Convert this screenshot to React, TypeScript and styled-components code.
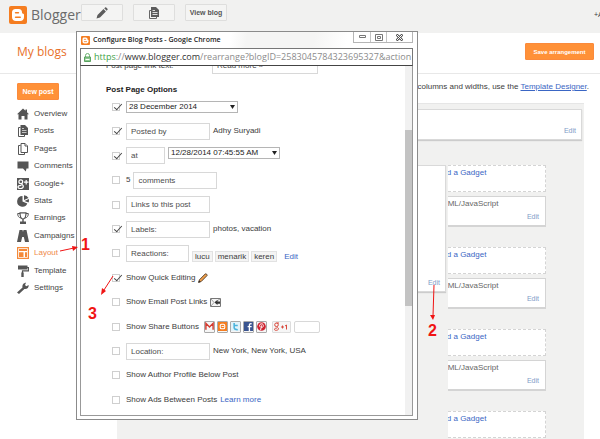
import React from "react";
import styled, { createGlobalStyle } from "styled-components";

const ORANGE = "#f08a4b";
const LINK = "#3a66c4";

const GlobalStyle = createGlobalStyle`
  * { box-sizing: border-box; }
  html, body { margin: 0; height: 100%; overflow: hidden; background: #fff; }
  #root { height: 100%; }
  body, button, input, select {
    font-family: "Liberation Sans", Arial, sans-serif;
    font-size: 8px;
    line-height: 10px;
    color: #3c3c3c;
  }
  a { text-decoration: none; color: ${LINK}; }
  svg { flex: none; }
`;

const Page = styled.div`
  position: relative;
  display: flex;
  flex-direction: column;
  height: 100%;
  overflow: hidden;
`;

const TopBar = styled.header`
  display: flex;
  align-items: flex-start;
  flex: 0 0 33px;
  padding: 4px 0 0 9px;
  background: #f1f1f0;
`;

const Brand = styled.a`
  display: flex;
  align-items: center;
  gap: 4px;
  width: 72px;
  height: 22px;
  font: 14px/22px "Open Sans", sans-serif;
  color: #6b6b6b;
  white-space: nowrap;
`;

const BarButton = styled.button`
  display: flex;
  align-items: center;
  justify-content: center;
  width: 42px;
  height: 17px;
  margin-right: 10px;
  padding: 0;
  border: 1px solid #dededd;
  border-radius: 1px;
  background: #f4f4f3;
  font-size: 7px;
  font-weight: bold;
  color: #555;
  white-space: nowrap;
`;

const Account = styled.span`
  width: 6px;
  margin-left: auto;
  padding-top: 6px;
  overflow: hidden;
  font-size: 7px;
  white-space: nowrap;
`;

const SubHeader = styled.div`
  display: flex;
  align-items: center;
  justify-content: space-between;
  flex: 0 0 41px;
  padding: 0 6px 3px 17px;
  border-bottom: 1px solid #e8e8e8;
`;

const PageTitle = styled.h1`
  margin: 0;
  font: 12px/18px "Open Sans", sans-serif;
  color: #e8702a;
`;

const OrangeButton = styled.button<{ $wide?: boolean }>`
  width: ${(p) => (p.$wide ? 69 : 42)}px;
  height: 17px;
  padding: 0;
  border: 1px solid #fb8a3c;
  border-radius: 1px;
  background: #ff9138;
  font-size: ${(p) => (p.$wide ? 6 : 7)}px;
  font-weight: bold;
  color: #fff;
  white-space: nowrap;
`;

const Body = styled.div`
  display: flex;
  flex: 1;
  min-height: 0;
`;

const Sidebar = styled.aside`
  flex: 0 0 117px;
  padding: 9px 0 0 17px;
`;

const Nav = styled.nav`
  display: grid;
  grid-auto-rows: 1fr;
  height: 192px;
  margin-top: 5px;
`;

const NavLink = styled.a<{ $active?: boolean }>`
  display: flex;
  align-items: center;
  gap: 5px;
  color: ${(p) => (p.$active ? ORANGE : "#444")};
  svg { color: ${(p) => (p.$active ? "#f58a3a" : "#555")}; }
`;

const Main = styled.main`
  display: flex;
  flex-direction: column;
  flex: 1;
  min-width: 0;
  padding: 8px 16px 0 0;
`;

const Hint = styled.p`
  margin: 0 -5px 11px 0;
  text-align: right;
  white-space: nowrap;
  a { text-decoration: underline; }
`;

const Canvas = styled.div`
  flex: 1;
  min-height: 0;
  padding: 5px 2px 0 0;
  border-top: 1px solid #e6e6e6;
  background: #f1f1f0;
`;

const Widget = styled.section<{ $height: number }>`
  display: flex;
  align-items: flex-end;
  justify-content: flex-end;
  height: ${(p) => p.$height}px;
  padding: 0 5px 3px;
  border: 1px solid #d9d9d9;
  box-shadow: 0 1px 1px #ccc;
  background: #fff;
`;

const EditLink = styled.a`
  font-size: 7px;
  line-height: 10px;
  color: #7f9cc8;
`;

const Columns = styled.div`
  display: flex;
  gap: 2px;
  padding: 25px 36px 0 0;
`;

const PostColumn = styled.div`
  flex: 1;
`;

const GadgetColumn = styled.div`
  display: flex;
  flex-direction: column;
  flex: 0 0 98px;
  overflow: hidden;
`;

const AddGadget = styled.a`
  height: 27px;
  margin: 0 0 4px -20px;
  padding: 2px 8px;
  border: 1px dashed #d4d4d4;
  background: #fff;
`;

const Gadget = styled.section`
  display: flex;
  flex-direction: column;
  justify-content: space-between;
  height: 31px;
  margin: 0 0 20px -20px;
  padding: 2px 6px 3px 8px;
  border: 1px solid #d4d4d4;
  border-bottom: 2px solid #d4d4d4;
  background: #fff;
  color: #666;
  ${EditLink} { align-self: flex-end; }
`;

const Popup = styled.section`
  position: absolute;
  top: 31px;
  bottom: 19px;
  left: 76px;
  display: flex;
  flex-direction: column;
  width: 57vw;
  padding: 0 4px 3px 3px;
  border: 1px solid #8b8b8b;
  background: #fff;
`;

const TitleBar = styled.header`
  display: flex;
  align-items: center;
  flex: 0 0 16px;
  gap: 3px;
  padding-left: 1px;
  background: linear-gradient(100deg, #fff 45%, #f5f5f4 50%, #f5f5f4 70%, #fff 80%);
  font-size: 7px;
`;

const WindowTitle = styled.h2`
  margin: 0;
  flex: 1;
  font: 600 7px/12px "Open Sans", sans-serif;
  color: #222;
  white-space: nowrap;
`;

const WindowButtons = styled.div`
  display: flex;
  align-self: flex-start;
  border: solid #b5b5b5;
  border-width: 0 1px 1px;
`;

const WindowButton = styled.button<{ $wide?: boolean }>`
  display: flex;
  align-items: center;
  justify-content: center;
  width: ${(p) => (p.$wide ? 26 : 16)}px;
  height: 10px;
  padding: 0;
  border: 0 solid #c4c4c4;
  background: #fff;
  & + & { border-left-width: 1px; }
`;

const AddressBar = styled.div`
  display: flex;
  align-items: center;
  flex: 0 0 18px;
  gap: 3px;
  padding-left: 3px;
  border: 1px solid #777;
  border-bottom-color: #444;
  overflow: hidden;
  font: 9px/16px "Open Sans", sans-serif;
  color: #8b8b8b;
  white-space: nowrap;
  em { font-style: normal; color: #3fa348; }
  b { font-weight: normal; color: #333; }
`;

const Viewport = styled.div`
  display: flex;
  flex: 1;
  min-height: 0;
  overflow: hidden;
  border: solid #999;
  border-width: 0 1px 1px;
`;

const Form = styled.form`
  display: flex;
  flex-direction: column;
  flex: 1;
  min-width: 0;
  margin-top: -9px;
  padding: 0 0 6px 25px;
`;

const ScrollTrack = styled.div`
  flex: 0 0 7px;
  padding-top: 64px;
  background: #f1f1f1;
`;

const ScrollThumb = styled.div`
  height: 176px;
  background: #c3c3c3;
`;

const LinkTextRow = styled.div`
  display: grid;
  grid-template-columns: 106px 106px;
  align-items: center;
  flex: 0 0 17px;
`;

const SectionTitle = styled.h3`
  margin: 11px 0 3px;
  font-size: 8px;
  line-height: 10px;
  color: #222;
`;

const Options = styled.div`
  display: flex;
  flex-direction: column;
  justify-content: space-between;
  flex: 1;
`;

const Option = styled.div`
  display: flex;
  align-items: center;
  height: 18px;
  padding-left: 6px;
  gap: 3px;
  white-space: nowrap;
`;

const CheckBox = styled.input.attrs({ type: "checkbox" })`
  appearance: none;
  display: grid;
  flex: none;
  width: 8px;
  height: 8px;
  margin: 0 3px 0 0;
  border: 1px solid #cfcfcf;
  background: #fff;
  &:checked::after {
    content: "";
    width: 3px;
    height: 7px;
    margin: -2px 0 0 3px;
    border: solid #444;
    border-width: 0 1px 1px 0;
    transform: rotate(42deg);
  }
`;

const Field = styled.input<{ $w: number }>`
  width: ${(p) => p.$w}px;
  height: 17px;
  padding: 0 4px;
  border: 1px solid #d8d8d8;
  background: #fff;
  color: #4c4c4c;
`;

const SelectBox = styled.span<{ $raised?: boolean }>`
  display: inline-grid;
  align-items: center;
  width: 112px;
  align-self: ${(p) => (p.$raised ? "flex-start" : "center")};
  > * { grid-area: 1 / 1; }
  svg { justify-self: end; margin-right: 3px; pointer-events: none; }
`;

const Select = styled.select`
  appearance: none;
  width: 100%;
  height: 12px;
  padding: 0 2px;
  border: 1px solid #b5b5b5;
  border-radius: 0;
  background: #fff;
  color: #222;
`;

const Chips = styled.span`
  display: flex;
  align-items: center;
  gap: 2px;
  align-self: flex-end;
  a { margin-left: 5px; }
`;

const Chip = styled.span`
  height: 11px;
  padding: 0 2px;
  border: 1px solid #e2e2e2;
  background: #f4f4f4;
`;

const Shares = styled.span`
  display: flex;
  align-items: center;
  gap: 2px;
  margin-left: 2px;
`;

const ShareButton = styled.button<{ $wide?: boolean }>`
  display: flex;
  align-items: center;
  justify-content: center;
  width: ${(p) => (p.$wide ? 19 : 11)}px;
  height: 12px;
  margin-left: ${(p) => (p.$wide ? 3 : 0)}px;
  padding: 0;
  border: 1px solid ${(p) => (p.$wide ? "#ddd" : "#aaa")};
  border-radius: 1px;
  background: #f6f6f6;
`;

const Bubble = styled.span`
  width: 26px;
  height: 12px;
  margin-left: 1px;
  border: 1px solid #d8d8d8;
  border-radius: 2px;
`;

const Arrows = styled.svg`
  position: absolute;
  top: 0;
  left: 0;
  pointer-events: none;
`;

const Step = styled.strong<{ $x: number; $y: number }>`
  position: absolute;
  left: ${(p) => p.$x}px;
  top: ${(p) => p.$y}px;
  font: bold 16px/16px "Liberation Sans Narrow", "Liberation Sans", sans-serif;
  color: #f01414;
`;

const BloggerMark = ({ size }: { size: number }) => (
  <svg width={size} height={size} viewBox="0 0 18 18" aria-hidden="true">
    <rect width="18" height="18" rx="2" fill="#f57d20" />
    <path fill="#fff" d="M6.5 3h3.2C12 3 13 4.500 13 6.300c0 1 .3 1.400 1.100 1.400.6 0 .9.400.9 1V11c0 2.500-1.500 4-4 4H7c-2.500 0-4-1.500-4-4V6.500C3 4.300 4.300 3 6.500 3z" />
    <path stroke="#f57d20" strokeWidth="1.600" strokeLinecap="round" d="M6.600 6.700h2.800M6.600 11.300h4.600" />
  </svg>
);

const PencilGlyph = () => (
  <svg width="12" height="12" viewBox="0 0 12 12" fill="#5c5c5c" aria-hidden="true">
    <path d="M.5 11.500l1-3.500L7.500 2l2.400 2.400L4 10.500zM8.200 1.300l1-.9c.3-.3.700-.3 1 0l1.300 1.400c.3.300.3.700 0 1l-.8.900z" />
  </svg>
);

const PagesGlyph = () => (
  <svg width="12" height="12" viewBox="0 0 12 12" aria-hidden="true">
    <path fill="none" stroke="#666" d="M3.500 3.500h-2v8h7v-2" />
    <path fill="#5c5c5c" d="M3 0h5l3 3v7H3z" />
    <path stroke="#ddd" d="M4.500 3.500H7M4.500 5.500h5M4.500 7.500h5" />
  </svg>
);

const navShapes: Record<string, React.ReactNode> = {
  Overview: <path fill="currentColor" d="M6 .5l2.500 2.300V1.500H10v2.700l2 2.100h-1.500V11.500h-3V8h-3v3.500h-3V6.300H0z" />,
  Posts: (
    <>
      <path fill="none" stroke="currentColor" d="M3.500 2.500h-2v9h6v-2" />
      <path fill="currentColor" d="M3.500 0h4.500L11 3v7H3.500z" />
      <path stroke="#ddd" strokeWidth=".8" d="M5 3.500h2M5 5.500h4.500M5 7.500h4.500" />
    </>
  ),
  Pages: (
    <g fill="#fff" stroke="currentColor">
      <path d="M3.500 2.500h-2v9h6v-2" />
      <path d="M4 .5h4L10.500 3v6.500H4z" />
      <path d="M8 .5V3h2.500" />
    </g>
  ),
  Comments: <path fill="currentColor" d="M.5 1.500h11v7H9.500L8.800 11.500 6 8.500H.5z" />,
  "Google+": (
    <>
      <path fill="currentColor" d="M0 0h12v12H0z" />
      <g fill="none" stroke="#fff" strokeWidth="1.200">
        <circle cx="3.800" cy="3.700" r="1.900" />
        <path d="M4.500 5.500c0 1 1.800 1.300 1.800 2.800C6.300 10 5 10.500 3.500 10.500S1 10 1 9s1-1.700 3.500-1.700M9.200 2v4.500M7 4.200h4.500" />
      </g>
    </>
  ),
  Stats: (
    <>
      <path fill="currentColor" d="M5.500 1v5.500l4.800 2A5.300 5.300 0 1 1 5.500 1z" />
      <path fill="currentColor" d="M7 .3A5.500 5.500 0 0 1 11.500 3L7 5z" />
      <path fill="currentColor" d="M7.500 6l4.300-2c.3 1.200.2 2.600-.3 3.600z" />
    </>
  ),
  Earnings: (
    <>
      <path fill="none" stroke="currentColor" d="M3 1.500H.7C.7 4 1.500 5.500 4 6M9 1.500h2.300C11.300 4 10.500 5.500 8 6" />
      <path fill="none" stroke="currentColor" strokeWidth="1.200" d="M3 .8h6C9 4.500 8 7 6 7S3 4.500 3 .8z" />
      <path fill="currentColor" d="M5.300 7h1.400v2.500H9V12H3V9.500h2.300z" />
    </>
  ),
  Campaigns: <path fill="currentColor" d="M2.500 0h3L6 2l.5-2h3L12 12H8L6.800 7H5.200L4 12H0z" />,
  Layout: (
    <>
      <path fill="none" stroke="currentColor" strokeWidth="1.200" d="M.6.600h10.800v10.800H.6z" />
      <path fill="currentColor" d="M2 2h8v2H2zM2 5.200h4.500V10H2zM8 5.200h2V10H8z" />
    </>
  ),
  Template: (
    <>
      <path fill="currentColor" d="M1 .5h9.500v4H1z" />
      <path fill="none" stroke="currentColor" strokeWidth="1.200" d="M10 2.500h1.500v3.300H5.500V8" />
      <path fill="currentColor" d="M4.300 7.500h2.400V12H4.300z" />
    </>
  ),
  Settings: (
    <path fill="currentColor" d="M0 10.500l5.500-5C5 3 6.500.8 9 .8L8 3l1.300 1.300L11.700 3c.3 2.500-1.800 4.500-4.300 4L2 12z" />
  ),
};

const DownArrow = () => (
  <svg width="5" height="4" viewBox="0 0 5 4" aria-hidden="true">
    <path fill="#222" d="M0 0h5L2.500 4z" />
  </svg>
);

const OrangePencil = () => (
  <svg width="10" height="10" viewBox="0 0 10 10" aria-hidden="true">
    <path fill="#f2a04a" stroke="#4a3320" strokeWidth=".9" d="M.6 9.400l.9-2.700L7.300.9c.6-.6 2.300.9 1.700 1.700L3.200 8.500z" />
    <path fill="#222" d="M.4 9.600l.6-2 1.400 1.400z" />
  </svg>
);

const MailIcon = () => (
  <svg width="11" height="9" viewBox="0 0 11 9" aria-hidden="true">
    <path fill="#f4f4f4" stroke="#777" d="M.5.5h10v8H.5z" />
    <path fill="none" stroke="#888" strokeWidth=".8" d="M1 1l3 3.500L1 8M5 4l5-3" />
    <path fill="#333" d="M4.500 4.500L7.500 2v1.500H10v2.200H7.500V7z" />
  </svg>
);

const shareShapes: Record<string, React.ReactNode> = {
  Email: <path fill="none" stroke="#d33b30" strokeWidth="1.600" d="M1 8.500v-7l4 4 4-4v7" />,
  Blogger: (
    <>
      <path fill="#f57d20" d="M0 0h10v10H0z" />
      <rect x="2.500" y="2.500" width="5" height="5" rx="1.500" fill="none" stroke="#fff" strokeWidth="1.200" />
      <path stroke="#fff" d="M4 5h2.500" />
    </>
  ),
  Twitter: (
    <>
      <path fill="#e2f3fa" d="M0 0h10v10H0z" />
      <path fill="none" stroke="#4ab3dc" strokeWidth="1.700" d="M3.500 1v5.500c0 1.500 1 2 4 2M3.500 3.800h4" />
    </>
  ),
  Facebook: (
    <>
      <path fill="#3b5590" d="M0 0h10v10H0z" />
      <path fill="none" stroke="#fff" strokeWidth="1.500" d="M8.500 2C6.500 1.500 6 2.500 6 4v6M4 5.200h4.500" />
    </>
  ),
  Pinterest: (
    <>
      <circle cx="5" cy="5" r="4.800" fill="#cf2430" />
      <path fill="none" stroke="#fff" strokeWidth="1.100" d="M3.300 5.300C2 3 4 1.900 5.300 2c2.500.2 2 4 .3 4-.8 0-1-.5-1-.5M5 3.800L4 9" />
    </>
  ),
};

const GooglePlusOne = () => (
  <svg width="16" height="10" viewBox="0 0 16 10" fill="none" stroke="#d8493c" aria-hidden="true">
    <circle cx="3.500" cy="2.800" r="1.800" />
    <path d="M4 4.500c0 1 1.500 1.200 1.500 2.500S1.500 9 1.500 7.500 3 6.300 4 6M3.500 1H6M8 5h3M9.500 3.500v3M12 4l1.500-1v4.500" />
  </svg>
);

type TickProps = { id: string; on?: boolean; label?: string };
const Tick = ({ id, on, label }: TickProps) => (
  <CheckBox id={id} defaultChecked={on} aria-label={label} />
);

const ConfigureWindow = () => (
  <Popup aria-label="Configure Blog Posts">
    <TitleBar>
      <BloggerMark size={9} />
      <WindowTitle>Configure Blog Posts - Google Chrome</WindowTitle>
      <WindowButtons>
        <WindowButton aria-label="Minimize">
          <svg width="7" height="4"><path fill="none" stroke="#777" d="M.5.500h6v2h-6z" /></svg>
        </WindowButton>
        <WindowButton aria-label="Maximize">
          <svg width="8" height="7"><path fill="none" stroke="#777" d="M.5.500h7v6h-7zM2.500 2.500h3v2h-3z" /></svg>
        </WindowButton>
        <WindowButton $wide aria-label="Close">
          <svg width="7" height="7">
            <path stroke="#555" strokeWidth="2.600" d="M.5.500l6 6M6.500.500l-6 6" />
            <path stroke="#fff" strokeWidth="1" d="M1 1l5 5M6 1L1 6" />
          </svg>
        </WindowButton>
      </WindowButtons>
    </TitleBar>
    <AddressBar>
      <svg width="7" height="9" viewBox="0 0 7 9" aria-hidden="true">
        <path fill="none" stroke="#6ab070" d="M1.500 4V2.500a2 2 0 0 1 4 0V4" />
        <path fill="#8cc88f" stroke="#5aa361" d="M.5 4h6v4.500h-6z" />
        <path stroke="#fff" d="M1.500 6.500h4" />
      </svg>
      <span><em>https</em>://<b>www.blogger.com</b>/rearrange?blogID=2583045784323695327&amp;action</span>
    </AddressBar>
    <Viewport>
      <Form>
        <LinkTextRow>
          <label htmlFor="link-text">Post page link text:</label>
          <Field id="link-text" $w={106} defaultValue="Read more »" />
        </LinkTextRow>
        <SectionTitle>Post Page Options</SectionTitle>
        <Options>
          <Option>
            <Tick id="date" on label="Show date" />
            <SelectBox>
              <Select aria-label="Date format"><option>28 December 2014</option></Select>
              <DownArrow />
            </SelectBox>
          </Option>
          <Option>
            <Tick id="author" on label="Show author" />
            <Field $w={84} aria-label="Author prefix" defaultValue="Posted by" />
            <span>Adhy Suryadi</span>
          </Option>
          <Option>
            <Tick id="time" on label="Show time" />
            <Field $w={39} aria-label="Time prefix" defaultValue="at" />
            <SelectBox $raised>
              <Select aria-label="Time format"><option>12/28/2014 07:45:55 AM</option></Select>
              <DownArrow />
            </SelectBox>
          </Option>
          <Option>
            <Tick id="comments" />
            <label htmlFor="comments">5</label>
            <Field $w={84} aria-label="Comments text" defaultValue="comments" />
          </Option>
          <Option>
            <Tick id="links" label="Show links" />
            <Field $w={84} aria-label="Links text" defaultValue="Links to this post" />
          </Option>
          <Option>
            <Tick id="labels" on label="Show labels" />
            <Field $w={84} aria-label="Labels text" defaultValue="Labels:" />
            <span>photos, vacation</span>
          </Option>
          <Option>
            <Tick id="reactions" label="Show reactions" />
            <Field $w={63} aria-label="Reactions text" defaultValue="Reactions:" />
            <Chips>
              <Chip>lucu</Chip>
              <Chip>menarik</Chip>
              <Chip>keren</Chip>
              <a href="#reactions">Edit</a>
            </Chips>
          </Option>
          <Option>
            <Tick id="quick" on />
            <label htmlFor="quick">Show Quick Editing</label>
            <OrangePencil />
          </Option>
          <Option>
            <Tick id="email" />
            <label htmlFor="email">Show Email Post Links</label>
            <MailIcon />
          </Option>
          <Option>
            <Tick id="share" />
            <label htmlFor="share">Show Share Buttons</label>
            <Shares>
              {Object.entries(shareShapes).map(([name, shape]) => (
                <ShareButton key={name} type="button" aria-label={name}>
                  <svg width="9" height="9" viewBox="0 0 10 10">{shape}</svg>
                </ShareButton>
              ))}
              <ShareButton $wide type="button" aria-label="Google +1"><GooglePlusOne /></ShareButton>
              <Bubble />
            </Shares>
          </Option>
          <Option>
            <Tick id="location" label="Show location" />
            <Field $w={84} aria-label="Location text" defaultValue="Location:" />
            <span>New York, New York, USA</span>
          </Option>
          <Option>
            <Tick id="profile" />
            <label htmlFor="profile">Show Author Profile Below Post</label>
          </Option>
          <Option>
            <Tick id="ads" />
            <label htmlFor="ads">Show Ads Between Posts</label>
            <a href="#ads">Learn more</a>
          </Option>
        </Options>
      </Form>
      <ScrollTrack><ScrollThumb /></ScrollTrack>
    </Viewport>
  </Popup>
);

export default function App() {
  return (
    <Page>
      <GlobalStyle />
      <TopBar>
        <Brand href="#home"><BloggerMark size={18} />Blogger</Brand>
        <BarButton aria-label="New post"><PencilGlyph /></BarButton>
        <BarButton aria-label="Post list"><PagesGlyph /></BarButton>
        <BarButton>View blog</BarButton>
        <Account>+Adhy</Account>
      </TopBar>
      <SubHeader>
        <PageTitle>My blogs</PageTitle>
        <OrangeButton $wide>Save arrangement</OrangeButton>
      </SubHeader>
      <Body>
        <Sidebar>
          <OrangeButton>New post</OrangeButton>
          <Nav>
            {Object.entries(navShapes).map(([name, shape]) => (
              <NavLink key={name} href={`#${name}`} $active={name === "Layout"}>
                <svg width="12" height="12" viewBox="0 0 12 12" aria-hidden="true">{shape}</svg>
                {name}
              </NavLink>
            ))}
          </Nav>
        </Sidebar>
        <Main>
          <Hint>columns and widths, use the <a href="#designer">Template Designer</a>.</Hint>
          <Canvas>
            <Widget $height={31}><EditLink href="#header">Edit</EditLink></Widget>
            <Columns>
              <PostColumn>
                <Widget $height={127}><EditLink href="#posts">Edit</EditLink></Widget>
              </PostColumn>
              <GadgetColumn>
                {[1, 2, 3].map((n) => (
                  <React.Fragment key={n}>
                    <AddGadget href="#add">Add a Gadget</AddGadget>
                    <Gadget>
                      <span>HTML/JavaScript</span>
                      <EditLink href="#gadget">Edit</EditLink>
                    </Gadget>
                  </React.Fragment>
                ))}
                <AddGadget href="#add">Add a Gadget</AddGadget>
              </GadgetColumn>
            </Columns>
          </Canvas>
        </Main>
      </Body>
      <ConfigureWindow />
      <Arrows width="600" height="439" fill="#f01414" stroke="#f01414" aria-hidden="true">
        <path d="M60 251l14-3M113 276l-9 14M434 285l-1 31" />
        <path stroke="none" d="M78 247l-6-1 1 5zM101 295l1-7 4 3zM433 320l-3-5h5z" />
      </Arrows>
      <Step $x={81} $y={237}>1</Step>
      <Step $x={428} $y={323}>2</Step>
      <Step $x={88} $y={306}>3</Step>
    </Page>
  );
}
